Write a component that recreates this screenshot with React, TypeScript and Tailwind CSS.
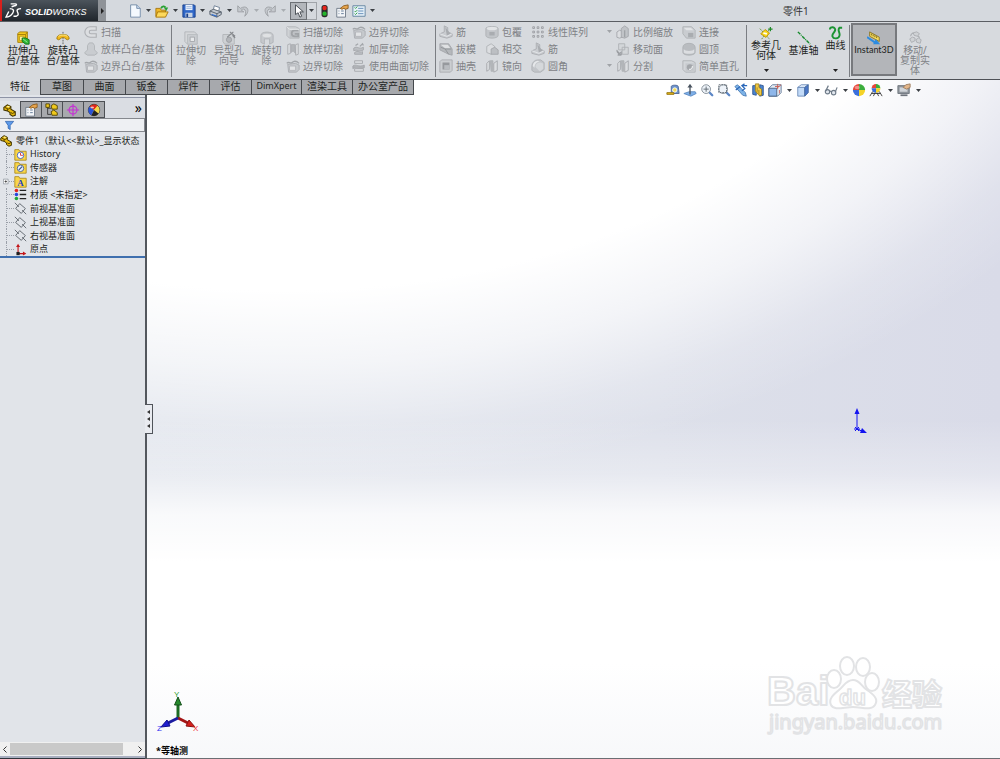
import clsx from "clsx";
import { JSX, ReactNode, useState } from "react";

type Command = { label: string; icon: string; menu?: boolean };

const bossCommands: Command[] = [
  { label: "扫描", icon: "sweep" },
  { label: "放样凸台/基体", icon: "loft" },
  { label: "边界凸台/基体", icon: "boundary" },
];

const cutCommands: Command[][] = [
  [
    { label: "扫描切除", icon: "sweepCut" },
    { label: "放样切割", icon: "loftCut" },
    { label: "边界切除", icon: "boundary" },
  ],
  [
    { label: "边界切除", icon: "boundary" },
    { label: "加厚切除", icon: "thicken" },
    { label: "使用曲面切除", icon: "surfaceCut" },
  ],
];

const ribCommands: Command[] = [
  { label: "筋", icon: "rib" },
  { label: "拔模", icon: "draft" },
  { label: "抽壳", icon: "shell" },
];

const wrapCommands: Command[] = [
  { label: "包覆", icon: "wrap" },
  { label: "相交", icon: "intersect" },
  { label: "镜向", icon: "mirror" },
];

const patternCommands: Command[] = [
  { label: "线性阵列", icon: "pattern", menu: true },
  { label: "筋", icon: "rib" },
  { label: "圆角", icon: "fillet", menu: true },
];

const scaleCommands: Command[] = [
  { label: "比例缩放", icon: "scale" },
  { label: "移动面", icon: "moveFace" },
  { label: "分割", icon: "mirror" },
];

const joinCommands: Command[] = [
  { label: "连接", icon: "join" },
  { label: "圆顶", icon: "dome" },
  { label: "简单直孔", icon: "hole" },
];

const tabs = [
  { label: "特征", width: "w-[41px]" },
  { label: "草图", width: "w-[43px]" },
  { label: "曲面", width: "w-[42px]" },
  { label: "钣金", width: "w-[42px]" },
  { label: "焊件", width: "w-[42px]" },
  { label: "评估", width: "w-[42px]" },
  { label: "DimXpert", width: "w-[50px]" },
  { label: "渲染工具", width: "w-[51px]" },
  { label: "办公室产品", width: "w-[61px]" },
];

const treeItems = [
  { label: "History", icon: "history" },
  { label: "传感器", icon: "sensor" },
  { label: "注解", icon: "annotation", expandable: true },
  { label: "材质 <未指定>", icon: "material" },
  { label: "前视基准面", icon: "plane" },
  { label: "上视基准面", icon: "plane" },
  { label: "右视基准面", icon: "plane" },
  { label: "原点", icon: "origin" },
];

const folder = (
  <path d="M1 2h5l1 2h8v11H1z" fill="#f9d648" stroke="#a9861a" strokeWidth="1" />
);

const partShape = (
  <>
    <path
      d="M1 5l4-3 4 2v3l5 3v4l-3 1-3-2v-2L5 9 1 8z"
      fill="#e8b90c"
      stroke="#3f3200"
      strokeWidth="1.2"
    />
    <path d="M2 5l4 2 3-2M9 11l2 1 3-2M5 7v2" fill="none" stroke="#3f3200" />
    <path d="M4 4l2-1 2 1-2 1z" fill="#fff3a0" />
  </>
);

const ball = (
  <>
    <path d="M8 8V1a7 7 0 0 0-7 7z" fill="#e8463a" />
    <path d="M8 8V1a7 7 0 0 1 7 7z" fill="#3cae3c" />
    <path d="M8 8h7a7 7 0 0 1-7 7z" fill="#f5d328" />
    <path d="M8 8v7a7 7 0 0 1-7-7z" fill="#3a6fdc" />
    <ellipse cx="6" cy="5" rx="3" ry="2" fill="#fff" opacity="0.4" />
  </>
);

const appearance = (
  <>
    <circle cx="8" cy="8" r="6.5" fill="#f3c81c" stroke="#333" />
    <path d="M8 8L3 4a6.500 6.500 0 0 1 9-1z" fill="#e0241c" />
    <path d="M8 8l4-5a6.500 6.500 0 0 1 1 9z" fill="#f3d84c" />
    <path d="M8 8l5 4a6.500 6.500 0 0 1-8 2z" fill="#222" />
    <path d="M8 8l-3 6a6.500 6.500 0 0 1-2-10z" fill="#2a52d8" />
    <ellipse cx="6" cy="5" rx="2" ry="1" fill="#fff" opacity="0.7" />
  </>
);

const printer = (
  <>
    <path d="M5 7l1-5 6 2-1 5z" fill="#fff" stroke="#66788f" />
    <path d="M1 8l4-2 9 3v3l-5 3-8-3z" fill="#c3c9d1" stroke="#4f5965" />
    <path d="M1 8l8 3 5-2M9 11v4" fill="none" stroke="#4f5965" />
    <path d="M3 12l6 2" stroke="#2a6ad0" strokeWidth="1.5" />
  </>
);

const magnifier = (
  <>
    <path d="M10 10l4 4" stroke="#5b86c6" strokeWidth="2.6" strokeLinecap="round" />
    <circle cx="7" cy="7" r="5" fill="#eef3f9" stroke="#7d8790" />
  </>
);

const icons: Record<string, ReactNode> = {
  // greyed ribbon glyphs
  sweep: (
    <path
      d="M14 2H7a6 6 0 0 0 0 12h7v-4H8a2 2 0 0 1 0-4h6z"
      fill="#dcdee1"
      stroke="#adb0b4"
      strokeWidth="1.3"
    />
  ),
  loft: (
    <path
      d="M6 1h4l2 3v5l3 3v1l-3 2H4l-3-2v-1l3-3V4z"
      fill="#c9ccd0"
      stroke="#b0b3b7"
    />
  ),
  boundary: (
    <>
      <path d="M2 6l9-1 4 2v5l-3 3H3z" fill="#c6c9cd" stroke="#a9acb0" />
      <path d="M1 5c2-3 4 1 6-1s5-2 8 1" fill="none" stroke="#a3a6aa" strokeWidth="1.500" />
      <path d="M4 8h7v5H4z" fill="#e2e4e6" stroke="#b2b5b9" />
    </>
  ),
  sweepCut: (
    <>
      <path d="M1 2h10l4 2v11H4l-3-3z" fill="#cfd2d5" stroke="#b2b5b9" />
      <path d="M4 5h11v10H4z" fill="#bfc2c6" />
      <path d="M14 6h-4a3 3 0 0 0 0 7h4v-3h-4" fill="none" stroke="#a0a3a7" strokeWidth="2" />
      <path d="M1 2l3 3h11" fill="none" stroke="#e8eaec" />
    </>
  ),
  loftCut: (
    <>
      <path d="M2 3l3-1v11l-3 1zM11 3l3-1v12l-3 1z" fill="#dcdee1" stroke="#a9acb0" />
      <path d="M6 3h4l1 10-3-3-2 2z" fill="#b3b6ba" stroke="#a9acb0" />
    </>
  ),
  thicken: (
    <>
      <path d="M2 7c4-3 6 2 11-1v3c-5 3-7-1-11 1zM3 12c4-3 6 1 9-1v3H3z" fill="#bcbfc3" stroke="#a3a6aa" />
      <path d="M4 4l3-2M9 5l3-3 1 2" stroke="#a3a6aa" strokeWidth="1.500" fill="none" />
    </>
  ),
  surfaceCut: (
    <>
      <path d="M3 2h9v3H3zM3 11h10v3H3z" fill="#dcdee1" stroke="#a3a6aa" />
      <path d="M1 8c4-3 6 2 13-1v3c-6 2-9-2-13 1z" fill="#b0b3b7" stroke="#a3a6aa" />
    </>
  ),
  rib: (
    <>
      <path d="M1 10l5-2V1l4 2v5l5 2v3l-6 2-8-2z" fill="#c9ccd0" stroke="#aaadb1" />
      <path d="M7 2l6 8-4 2z" fill="#a9acb0" />
      <path d="M1 10l8 3 6-3" fill="none" stroke="#e6e8ea" />
    </>
  ),
  draft: (
    <>
      <path d="M1 2h10l4 6v7l-4-1-10-5z" fill="#b5b8bc" stroke="#a3a6aa" />
      <path d="M2 3h8l3 4H7z" fill="#dfe1e3" />
      <path d="M7 8l4 6M2 6l5 2h7" fill="none" stroke="#8f9296" />
    </>
  ),
  shell: (
    <>
      <path d="M1 3l2-2h12v12l-2 2H1z" fill="#cbced1" stroke="#a9acb0" />
      <path d="M4 4h8v8H4z" fill="#96999d" />
      <path d="M6 7h6v5H6z" fill="#b9bcc0" />
    </>
  ),
  wrap: (
    <>
      <path d="M1 4c0-3 14-3 14 0v8c0 4-14 4-14 0z" fill="#c2c5c9" stroke="#aeb1b5" />
      <ellipse cx="8" cy="4" rx="6" ry="2" fill="#e2e4e6" />
      <path d="M5 8h6v4H5z" fill="#a9acb0" />
    </>
  ),
  intersect: (
    <>
      <path d="M2 5l5-3 4 3v5l-4 4-5-2z" fill="#dcdee1" stroke="#aeb1b5" />
      <path d="M7 8l4-2 4 3v5H7z" fill="#bcbfc3" stroke="#a3a6aa" />
    </>
  ),
  mirror: (
    <>
      <path d="M2 5l3-3v10l-3 2zM10 5l4-3v11l-4 2z" fill="#dcdee1" stroke="#a3a6aa" />
      <path d="M6 2h3v12H7z" fill="#b3b6ba" stroke="#aeb1b5" />
    </>
  ),
  pattern: (
    <path
      d="M2 2h2v2H2zM7 2h2v2H7zM12 2h2v2h-2zM2 7h2v2H2zM7 7h2v2H7zM12 7h2v2h-2zM2 12h2v2H2zM7 12h2v2H7zM12 12h2v2h-2z"
      fill="#d5d8db"
      stroke="#9a9da1"
    />
  ),
  fillet: (
    <>
      <path d="M1 13V8a7 7 0 0 1 7-7h3l4 3v8l-4 3H4z" fill="#c2c5c9" stroke="#aeb1b5" />
      <path d="M2 8a6 6 0 0 1 6-6l2 1c-4 0-6 3-6 7z" fill="#e6e8ea" />
      <path d="M5 9c0-3 2-5 6-5l3 1v6l-4 3z" fill="#d5d8db" />
    </>
  ),
  scale: (
    <>
      <path d="M1 8l3-2 3 1v7l-3 1-3-1z" fill="#dcdee1" stroke="#a3a6aa" />
      <path d="M6 4l4-3 4 3v9l-4 2-4-1z" fill="#c0c3c7" stroke="#a3a6aa" />
      <path d="M10 6v8" stroke="#8f9296" />
    </>
  ),
  moveFace: (
    <>
      <path d="M3 2h7v7H3zM7 6h7v8H7z" fill="#d3d6d9" stroke="#aeb1b5" />
      <path d="M1 9c0 4 2 5 5 5M6 11v4H2z" fill="#9a9da1" stroke="#9a9da1" />
    </>
  ),
  join: (
    <>
      <path d="M1 2h10l4 4v9H5l-4-5z" fill="#c9ccd0" stroke="#aeb1b5" />
      <path d="M2 3h8l3 3H5z" fill="#e2e4e6" />
      <path d="M7 9h6v5H7z" fill="#a9acb0" />
    </>
  ),
  dome: (
    <>
      <path d="M1 6c0-6 14-6 14 0v6c0 4-14 4-14 0z" fill="#b9bcc0" stroke="#aeb1b5" />
      <path d="M2 8c1 3 11 3 12 0v4c-1 2-11 2-12 0z" fill="#dcdee1" />
    </>
  ),
  hole: (
    <>
      <path d="M1 2h10l4 2v11H4l-3-3z" fill="#d3d6d9" stroke="#aeb1b5" />
      <path d="M4 5h10v9H4z" fill="#c6c9cd" />
      <circle cx="9" cy="9.500" r="3.500" fill="#a3a6aa" />
      <path d="M8 12c3 0 4-2 4-4" fill="none" stroke="#e6e8ea" strokeWidth="1.500" />
    </>
  ),
  extrudeCut: (
    <>
      <path d="M1 1h11l3 3v11H4l-3-3z" fill="#d5d7da" stroke="#b0b3b7" />
      <path d="M4 4h11v11H4z" fill="#c9ccd0" stroke="#b8bbbf" />
      <path d="M7 7h5v5H7z" fill="#e6e8ea" stroke="#a3a6aa" />
    </>
  ),
  holeWizard: (
    <>
      <path d="M1 4h10l3 2v9H3l-2-3z" fill="#ced1d4" stroke="#b0b3b7" />
      <circle cx="8" cy="10" r="3" fill="#b3b6ba" stroke="#9a9da1" />
      <path d="M6 7l7-6M9 1l6 5M12 5l3 3" stroke="#85888c" strokeWidth="1.300" />
    </>
  ),
  revolveCut: (
    <>
      <path d="M1 5c0-5 14-5 14 0v8l-4 2V9H5v6l-4-2z" fill="#c6c9cd" stroke="#b0b3b7" />
      <ellipse cx="8" cy="5" rx="5" ry="2" fill="#dfe1e3" />
    </>
  ),
  moveCopy: (
    <>
      <path d="M6 2l4-1 3 2-2 3-4-1zM2 9l3-2 3 1v3l-4 2zM9 10l3-2 3 2-1 4-4-1z" fill="#cfd2d5" stroke="#a9acb0" />
      <path d="M3 6c0-2 1-3 3-4M11 6c2 0 2 1 2 2" fill="none" stroke="#a9acb0" strokeWidth="1.300" />
    </>
  ),
  // coloured ribbon glyphs
  extrude: (
    <>
      <path d="M2 3l2-2h9v9l-2 3H2z" fill="#f3c81c" stroke="#a07a08" />
      <path d="M2 4h9v9M11 4l2-3" fill="none" stroke="#a07a08" />
      <path d="M4 6h5v5H4z" fill="#fdf0a0" stroke="#c09a18" />
      <path d="M7 8h4l4 2v5h-4l-4-3z" fill="#2fb637" stroke="#0f7016" />
      <path d="M8 9l5 4" stroke="#a2f0a0" />
    </>
  ),
  revolve: (
    <>
      <path d="M8 1v14" stroke="#555" strokeDasharray="2 1" />
      <path d="M1 9c0-4 3-5 7-5s7 1 7 5l-2 1-2-1c0-2-6-2-6 0l-2 1z" fill="#f3b81c" stroke="#a07a08" />
      <path d="M3 6c3-2 7-2 10 0" fill="none" stroke="#fdf0a0" />
    </>
  ),
  refGeometry: (
    <>
      <path d="M1 3l11 12M3 15l9-11" stroke="#5a8a2c" strokeDasharray="2 1" />
      <path d="M7 4l5 4-4 5-6-4z" fill="#f7d51a" stroke="#b89008" />
      <path d="M5 8l4 1" stroke="#fff" strokeWidth="2" />
      <path d="M13 1v5M10.500 3.500h5" stroke="#1e8a28" strokeWidth="1.400" />
    </>
  ),
  axis: <path d="M1 1l14 14" stroke="#138a2a" strokeWidth="1.600" strokeDasharray="4 1 1 1" />,
  curve: (
    <path
      d="M1 4c0-4 7-3 6 1-1 3-4 4-3 7s7 3 8-1-3-6 0-9h3"
      fill="none"
      stroke="#1c9433"
      strokeWidth="2.200"
    />
  ),
  instant: (
    <>
      <path d="M3 1l11 6v5L3 6z" fill="#f2d85c" stroke="#8a7420" />
      <path d="M5 3v2M7 4v2M9 5v2M11 6v2" stroke="#75621a" />
      <path d="M0 7l9 6" stroke="#2d8be0" strokeWidth="2.200" />
      <path d="M10 9l5 6H7z" fill="#2d8be0" />
    </>
  ),
  // quick access
  newDoc: (
    <>
      <path d="M3 1h7l4 4v10H3z" fill="#f4f9fe" stroke="#6f88a6" />
      <path d="M10 1v4h4" fill="#c8dcf0" stroke="#6f88a6" />
    </>
  ),
  open: (
    <>
      <path d="M1 5h5l1 2h5v7H1z" fill="#f0b92a" stroke="#a67408" />
      <path d="M3 9h12l-3 6H1z" fill="#fdd95c" stroke="#a67408" />
      <path d="M7 5c1-3 4-3 5-1" fill="none" stroke="#28a032" strokeWidth="2" />
      <path d="M10 4h5l-2 4z" fill="#28a032" />
    </>
  ),
  save: (
    <>
      <path d="M1 1h13l1 1v13H1z" fill="#2f67c8" stroke="#163c86" />
      <path d="M4 1h8v6H4z" fill="#eaf1fb" />
      <path d="M5 3h6M5 5h6" stroke="#9ab4dc" />
      <path d="M4 10h8v5H4z" fill="#c7d3e4" />
      <path d="M5 11h2v4H5z" fill="#1a3f86" />
    </>
  ),
  printer,
  undo: (
    <path d="M2 2v7h7L6 7c3-3 7 0 4 7 7-6 3-14-5-9z" fill="#c5c9ce" stroke="#9b9fa4" />
  ),
  redo: (
    <path d="M14 2v7H7l3-2C7 4 3 7 6 14-1 8 3 0 11 5z" fill="#c5c9ce" stroke="#9b9fa4" />
  ),
  pointer: (
    <path d="M4 1v11l3-2 2 5 2-1-2-5h4z" fill="#fff" stroke="#3c4148" />
  ),
  traffic: (
    <>
      <rect x="4" y="1" width="7" height="14" rx="3" fill="#2b2b2b" />
      <circle cx="7.500" cy="4.500" r="2.500" fill="#e8251c" />
      <circle cx="7.500" cy="11" r="2.500" fill="#23b52c" />
    </>
  ),
  properties: (
    <>
      <path d="M2 5h10v10H2z" fill="#f3f5f8" stroke="#6a7683" />
      <path d="M4 8h1M7 8h3M4 11h1M7 11h3" stroke="#58718f" />
      <path d="M6 5l4-3 5-1v4l-3 1-2-1-2 1z" fill="#e7a44c" stroke="#8a5a1c" />
    </>
  ),
  options: (
    <>
      <path d="M1 2h14v12H1z" fill="#e5f0f8" stroke="#5c7f9b" />
      <path d="M7 5h6M7 8h6M7 11h6" stroke="#5b87b5" />
      <path d="M3 4l1 1 2-2M3 8l1 1 2-2M3 11l1 1 2-2" fill="none" stroke="#209a30" />
    </>
  ),
  // heads-up view toolbar
  tape: (
    <>
      <path d="M6 4c0-2 8-2 8 0l1 8H6z" fill="#6e94cc" stroke="#4a6596" />
      <circle cx="10" cy="8" r="2.500" fill="#f2dc5a" stroke="#fff" />
      <path d="M1 11h8v2H1z" fill="#e4b818" stroke="#967510" />
    </>
  ),
  normalTo: (
    <>
      <path d="M1 12l6-2h7l1 2-6 3z" fill="#7fb1ea" stroke="#5a88c0" />
      <path d="M8 13V2" stroke="#48525e" strokeWidth="1.500" />
      <path d="M5 5l3-4 3 4z" fill="#48525e" />
    </>
  ),
  zoomFit: (
    <>
      {magnifier}
      <path d="M7 4v6M4 7h6" stroke="#59636d" />
    </>
  ),
  zoomArea: (
    <>
      {magnifier}
      <path d="M2 2h9v9H2z" fill="none" stroke="#59636d" strokeDasharray="2 1" />
    </>
  ),
  prevView: (
    <>
      <path d="M1 4l3-2 9 9 1 4-4-1z" fill="#7db3e8" stroke="#4a7bb4" />
      <path d="M2 8l5-4M15 3H9M12 1L9 3l3 3M9 9l4-3" fill="none" stroke="#2b68ba" strokeWidth="1.400" />
    </>
  ),
  section: (
    <>
      <path d="M2 3h4v11l-4-1zM10 2l4 1v11l-4 1z" fill="#4d85cf" stroke="#2c5490" />
      <path d="M5 1h4v4l3 2v7H9l-4-5z" fill="#f2cb45" stroke="#a5831a" />
      <path d="M7 5v5M9 8v5" stroke="#a5831a" />
    </>
  ),
  viewOrient: (
    <>
      <path d="M5 2h10v9l-4 4H1V6z" fill="#e5edf7" stroke="#5b7392" />
      <path d="M1 6h9v9H1z" fill="#8fb7ea" stroke="#48607f" />
      <path d="M10 6l5-4M8 4h5M11 1v6M13 8v4" stroke="#c95a50" />
    </>
  ),
  displayStyle: (
    <>
      <path d="M2 5h8v10H2z" fill="#c3dbf8" stroke="#6a8ab8" />
      <path d="M2 5l4-3h8l-4 3z" fill="#e7f1fd" stroke="#6a8ab8" />
      <path d="M10 5l4-3v9l-4 4z" fill="#4a77c8" stroke="#44689c" />
    </>
  ),
  glasses: (
    <g fill="#e2e8ef" stroke="#6f7b88" strokeWidth="1.300">
      <circle cx="4" cy="10" r="2.500" />
      <circle cx="11" cy="11" r="2.500" />
      <path d="M6 9l3 1M2 9l3-6M13 10l2-5" fill="none" />
    </g>
  ),
  ball,
  appearance,
  scene: (
    <>
      <path d="M1 15l3-5h8l3 5M5 15l2-4M11 15l-2-4M3 12h10" fill="none" stroke="#333" />
      <path d="M8 6V1a5 5 0 0 0-5 5z" fill="#e8463a" />
      <path d="M8 6V1a5 5 0 0 1 5 5z" fill="#3cae3c" />
      <path d="M8 6h5a5 5 0 0 1-5 5z" fill="#f5d328" />
      <path d="M8 6v5a5 5 0 0 1-5-5z" fill="#3a6fdc" />
    </>
  ),
  viewSettings: (
    <>
      <path d="M1 3h13v9H1z" fill="#8f959c" stroke="#6d737b" />
      <path d="M3 5h9v5H3z" fill="#d0d4d9" />
      <path d="M4 14h8" stroke="#6d737b" strokeWidth="2" />
      <path d="M7 5l3-3 5-1v4l-4 2z" fill="#e3b68a" stroke="#9a7a5c" />
    </>
  ),
  // feature manager
  part: partShape,
  config: (
    <>
      <path d="M3 2v11h4M3 6h4" fill="none" stroke="#333" />
      <path d="M1 1h4v4H1zM7 3l3-2 4 2v4H8zM7 10l3-2 4 3v3H8z" fill="#efc81c" stroke="#4f4000" />
    </>
  ),
  target: (
    <g fill="none" stroke="#c531d4" strokeWidth="1.300">
      <circle cx="8" cy="8" r="4.500" />
      <path d="M8 1v14M1 8h14" />
    </g>
  ),
  funnel: <path d="M2 2h12l-5 6v6l-3-2V8z" fill="#5e9bea" stroke="#2259a8" />,
  history: (
    <>
      {folder}
      <circle cx="8" cy="9" r="4" fill="#fff" stroke="#2b4fc0" />
      <path d="M8 6v3h3" fill="none" stroke="#c22" />
    </>
  ),
  sensor: (
    <>
      {folder}
      <circle cx="8" cy="9" r="4" fill="#e6efff" stroke="#38538a" />
      <path d="M6 11l4-4" stroke="#38538a" strokeWidth="1.500" />
    </>
  ),
  annotation: (
    <>
      {folder}
      <text x="8" y="13" textAnchor="middle" fontSize="11" fontWeight="700" fill="#1c3fc0" fontFamily="Liberation Serif, serif">
        A
      </text>
    </>
  ),
  material: (
    <>
      <circle cx="3" cy="3" r="2.200" fill="#e0241c" />
      <circle cx="3" cy="8" r="2.200" fill="#2844dc" />
      <circle cx="3" cy="13" r="2.200" fill="#1ea53a" />
      <path d="M7 3h8M7 8h8M7 13h8" stroke="#222" strokeWidth="1.600" />
    </>
  ),
  plane: (
    <path d="M2 8l5-6 7 6-5 6zM1 1l5 5M10 10l5 5" fill="none" stroke="#50565e" />
  ),
  origin: (
    <>
      <path d="M5 13V3M5 13h9" stroke="#c4181c" strokeWidth="1.400" />
      <path d="M2.500 5L5 1l2.500 4zM11 10.500l4 2.500-4 2.500z" fill="#c4181c" />
      <rect x="3" y="11" width="4" height="4" fill="#222" />
    </>
  ),
};

function Icon({ name, className = "size-[14px]" }: { name: string; className?: string }) {
  return (
    <svg viewBox="0 0 16 16" className={clsx("shrink-0", className)} aria-hidden="true">
      {icons[name]}
    </svg>
  );
}

function Caret({ className = "text-[#3b3f44]" }: { className?: string }) {
  return (
    <svg viewBox="0 0 5 3" className={clsx("h-[3px] w-[5px] shrink-0", className)} aria-hidden="true">
      <path d="M0 0h5L2.500 3z" fill="currentColor" />
    </svg>
  );
}

function CommandColumn({ commands, className }: { commands: Command[]; className: string }) {
  return (
    <div className={clsx("flex shrink-0 flex-col", className)}>
      {commands.map((command) => (
        <button
          key={command.label}
          className="flex h-[17px] items-center gap-[3px] text-left text-[#7f8286]"
        >
          <Icon name={command.icon} />
          <span className="flex-1">{command.label}</span>
          {command.menu && <Caret className="mr-1 text-[#a0a3a7]" />}
        </button>
      ))}
    </div>
  );
}

function BigCommand({
  label,
  icon,
  className,
  menu = false,
}: {
  label: string;
  icon: string;
  className: string;
  menu?: boolean;
}) {
  return (
    <button className={clsx("flex shrink-0 flex-col items-center leading-[10px]", className)}>
      <Icon name={icon} />
      <span className="whitespace-pre-line">{label}</span>
      {menu && <Caret className="mt-auto mb-[7px] text-[#222]" />}
    </button>
  );
}

function Divider() {
  return <div className="my-[2px] w-px shrink-0 self-stretch bg-[#7b7e83]" />;
}

function TitleBar() {
  const quickAccess = ["newDoc", "open", "save", "printer", "undo", "redo"];
  return (
    <header className="flex h-[22px] shrink-0 items-center border-b border-[#5b5e63] bg-[#d5d9de]">
      <div className="flex h-full w-[98px] shrink-0 items-center gap-[3px] border-l-2 border-[#d8201c] bg-gradient-to-b from-[#4c545c] to-[#20262c] pl-[3px] text-white">
        <svg viewBox="0 0 18 18" className="size-[17px]" fill="none" stroke="#fff" strokeWidth="1.500" aria-hidden="true">
          <path d="M6 2h5c2 0 1 2-1 2L7 5M5 7c4 0 5 2 3 5s-4 4-7 4l3-6" />
          <path d="M17 7c-3 0-5 1-4 3s2 4-1 5H9" />
        </svg>
        <span className="pt-[2px] font-['Liberation_Sans',sans-serif] text-[9px] font-bold italic">
          SOLID<span className="font-normal">WORKS</span>
        </span>
      </div>
      <button className="flex h-full w-[8px] items-center justify-center bg-[#8f9398]" aria-label="Menu">
        <svg viewBox="0 0 3 6" className="h-[6px] w-[3px]">
          <path d="M0 0l3 3-3 3z" fill="#222" />
        </svg>
      </button>
      <div className="ml-[22px] flex h-full items-center">
        {quickAccess.map((name, i) => (
          <button key={name} className="flex w-[27px] items-center gap-[4px]" aria-label={name}>
            <Icon name={name} />
            <Caret className={i > 3 ? "text-[#a9adb2]" : "text-[#3b3f44]"} />
          </button>
        ))}
        <button className="flex h-[18px] w-[17px] items-center justify-center border border-[#6d7176] bg-[#b2b6bb]" aria-label="选择">
          <Icon name="pointer" />
        </button>
        <button className="flex h-[18px] w-[10px] items-center justify-center border border-l-0 border-[#a0a4a9]" aria-label="选择选项">
          <Caret />
        </button>
        <button className="ml-[1px]" aria-label="重建模型">
          <Icon name="traffic" />
        </button>
        <button className="ml-[3px]" aria-label="文件属性">
          <Icon name="properties" />
        </button>
        <button className="ml-[3px] flex items-center gap-[4px]" aria-label="选项">
          <Icon name="options" />
          <Caret />
        </button>
      </div>
      <p className="flex-1 pl-[408px] text-[#333]">零件1</p>
    </header>
  );
}

function Ribbon() {
  return (
    <div className="flex h-[58px] shrink-0 overflow-hidden border-b border-[#4e5156] bg-[#d7dade] pt-px text-[#1d1f22]">
      <div className="flex w-[171px] shrink-0 pl-[3px]">
        <BigCommand label={"拉伸凸\n台/基体"} icon="extrude" className="w-[40px] pt-[8px]" />
        <BigCommand label={"旋转凸\n台/基体"} icon="revolve" className="w-[40px] pt-[8px]" />
        <CommandColumn commands={bossCommands} className="w-[86px] pl-[1px]" />
      </div>
      <Divider />
      <div className="flex w-[263px] shrink-0 text-[#7f8286]">
        <BigCommand label={"拉伸切\n除"} icon="extrudeCut" className="w-[38px] pt-[8px]" />
        <BigCommand label={"异型孔\n向导"} icon="holeWizard" className="w-[38px] pt-[8px]" />
        <BigCommand label={"旋转切\n除"} icon="revolveCut" className="w-[37px] pt-[8px]" />
        <CommandColumn commands={cutCommands[0]} className="w-[66px] pl-[1px]" />
        <CommandColumn commands={cutCommands[1]} className="w-[82px] pl-[1px]" />
      </div>
      <Divider />
      <div className="flex w-[310px] shrink-0 pl-[3px]">
        <CommandColumn commands={ribCommands} className="w-[46px]" />
        <CommandColumn commands={wrapCommands} className="w-[46px]" />
        <CommandColumn commands={patternCommands} className="w-[85px]" />
        <CommandColumn commands={scaleCommands} className="w-[66px]" />
        <CommandColumn commands={joinCommands} className="w-[65px]" />
      </div>
      <Divider />
      <div className="flex w-[102px] shrink-0">
        <BigCommand label={"参考几\n何体"} icon="refGeometry" className="w-[38px] pt-[3px]" menu />
        <BigCommand label="基准轴" icon="axis" className="w-[37px] pt-[8px]" />
        <BigCommand label="曲线" icon="curve" className="w-[27px] pt-[3px]" menu />
      </div>
      <Divider />
      <button className="ml-[1px] flex h-[53px] w-[46px] shrink-0 flex-col items-center border-2 border-[#77797d] bg-[#b3b5b9] pt-[6px] font-['Lato','Noto_Sans',sans-serif] text-[9px] leading-[10px]">
        <Icon name="instant" />
        Instant3D
      </button>
      <BigCommand
        label={"移动/\n复制实\n体"}
        icon="moveCopy"
        className="w-[36px] pt-[8px] text-[#7f8286]"
      />
    </div>
  );
}

function CommandTabs() {
  const [active, setActive] = useState("特征");
  return (
    <nav className="absolute top-0 left-0 flex h-[15px]">
      {tabs.map(({ label, width }) => (
        <button
          key={label}
          onClick={() => setActive(label)}
          className={clsx(
            "shrink-0 border-r border-[#45484c] pb-[3px] text-center leading-[12px] text-[#1d1f22]",
            width,
            label === active ? "-mt-px bg-[#d7dade]" : "border-b bg-[#a7a9ad]",
            label === "DimXpert" && "text-[9px]",
          )}
        >
          {label}
        </button>
      ))}
    </nav>
  );
}

function FeatureTree() {
  return (
    <div className="overflow-hidden border-b-2 border-[#3f6fae] pt-[2px] text-[9px] whitespace-nowrap text-[#1b1d20]">
      <ul className="grid h-[122px] auto-rows-fr">
        <li className="flex items-center gap-[3px]">
          <Icon name="part" className="size-[13px]" />
          <span>零件1（默认&lt;&lt;默认&gt;_显示状态</span>
        </li>
        {treeItems.map((item) => (
          <li key={item.label} className="flex items-center">
            <span className="flex w-[14px] shrink-0 items-center self-stretch pl-[3px]">
              {item.expandable ? (
                <svg viewBox="0 0 7 7" className="size-[7px]" aria-hidden="true">
                  <path d="M.5 .5h6v6h-6z" fill="#fff" stroke="#9096a0" />
                  <path d="M2 3.500h3M3.500 2v3" stroke="#333" />
                </svg>
              ) : (
                <span className="ml-[3px] h-full w-px border-l border-dotted border-[#9a9fa8]" />
              )}
              <span className="w-[7px] border-t border-dotted border-[#9a9fa8]" />
            </span>
            <Icon name={item.icon} className="size-[13px]" />
            <span className="ml-[3px]">{item.label}</span>
          </li>
        ))}
      </ul>
    </div>
  );
}

function FeatureManager() {
  const managerTabs = ["part", "properties", "config", "target", "appearance"];
  return (
    <aside className="flex w-[147px] shrink-0 flex-col border-r-2 border-[#53575d] bg-[#e1e4e9] pt-[15px]">
      <div className="mt-[2px] flex h-[21px] shrink-0 items-end border-t border-[#8d93a5] bg-[#dadde3]">
        {managerTabs.map((name, i) => (
          <button
            key={name}
            aria-label={name}
            className={clsx(
              "flex h-[17px] w-[21px] items-center justify-center border-r border-[#4c4f54]",
              i === 0 ? "bg-[#e1e4e9]" : "border-t border-b bg-[#a7a9ad]",
            )}
          >
            <Icon name={name} />
          </button>
        ))}
        <button className="mr-[3px] mb-[3px] ml-auto text-[14px] leading-[14px]" aria-label="展开">
          »
        </button>
      </div>
      <label className="flex h-[14px] shrink-0 items-center border border-l-0 border-[#85888e] bg-[#eef0f3] pl-[4px]">
        <Icon name="funnel" className="size-[11px]" />
        <input type="text" aria-label="过滤" className="h-full min-w-0 flex-1 bg-transparent outline-none" />
      </label>
      <FeatureTree />
      <div className="mt-auto flex h-[14px] shrink-0 items-center bg-[#f0f0f0]">
        <button className="flex w-[10px] justify-center" aria-label="向左滚动">
          <svg viewBox="0 0 4 7" className="h-[7px] w-[4px]" fill="none" stroke="#333">
            <path d="M3.500 .5l-3 3 3 3" />
          </svg>
        </button>
        <div className="h-[12px] w-[113px] bg-[#c9c9c9]" />
        <button className="ml-auto flex w-[10px] justify-center" aria-label="向右滚动">
          <svg viewBox="0 0 4 7" className="h-[7px] w-[4px]" fill="none" stroke="#333">
            <path d="M.5 .5l3 3-3 3" />
          </svg>
        </button>
      </div>
      <div className="h-[3px] shrink-0 border-b border-[#30343c] bg-[#a9afc0]" />
    </aside>
  );
}

function HeadsUpToolbar() {
  const tools: { name: string; menu?: boolean }[] = [
    { name: "tape" },
    { name: "normalTo" },
    { name: "zoomFit" },
    { name: "zoomArea" },
    { name: "prevView" },
    { name: "section" },
    { name: "viewOrient", menu: true },
    { name: "displayStyle", menu: true },
    { name: "glasses", menu: true },
    { name: "ball" },
    { name: "scene", menu: true },
    { name: "viewSettings", menu: true },
  ];
  return (
    <div className="flex justify-end pt-[3px] pr-[75px]">
      {tools.map(({ name, menu }) => (
        <button
          key={name}
          aria-label={name}
          className={clsx("flex items-center gap-[5px]", menu ? "w-[28px]" : "w-[17px]")}
        >
          <Icon name={name} />
          {menu && <Caret />}
        </button>
      ))}
    </div>
  );
}

function Triad(): JSX.Element {
  return (
    <svg viewBox="0 0 44 42" className="h-[42px] w-[44px]" aria-hidden="true">
      <path d="M22 28V12" stroke="#1c6b22" strokeWidth="3" />
      <path d="M18.500 15L22 7l3.500 8z" fill="#268a2c" stroke="#14501a" />
      <path d="M22 28l12 6" stroke="#a31414" strokeWidth="3" />
      <path d="M33 30l6 7-9-1z" fill="#d4201c" stroke="#8a1010" />
      <path d="M22 28l-12 6" stroke="#1a1aa0" strokeWidth="3" />
      <path d="M11 30l-6 7 9-1z" fill="#2020d0" stroke="#10108a" />
      <g fontFamily="Liberation Sans, sans-serif" fontSize="8">
        <text x="18" y="7" fill="#2ca032">Y</text>
        <text x="37" y="41" fill="#f03030">X</text>
        <text x="1" y="41" fill="#2a2af0">Z</text>
      </g>
    </svg>
  );
}

function OriginMarker() {
  return (
    <svg viewBox="0 0 16 28" className="absolute top-[327px] right-[131px] h-[28px] w-[16px]" aria-hidden="true">
      <path d="M4 22V5M4 22l7 3M2 20l4 4M6 20l-4 4M1 22h6" stroke="#1414f0" />
      <path d="M1.500 7L4 1l2.500 6zM9 21l5 5H7z" fill="#1414f0" />
    </svg>
  );
}

function Watermark() {
  return (
    <svg viewBox="0 0 184 90" className="h-[90px] w-[184px]" aria-hidden="true">
      <g
        fill="#fff"
        stroke="#e2e3e5"
        strokeWidth="2"
        strokeLinejoin="round"
        fontFamily="Liberation Sans, sans-serif"
        fontWeight="700"
      >
        <text x="4" y="57" fontSize="40">Bai</text>
        <ellipse cx="71" cy="31" rx="7" ry="9" />
        <ellipse cx="84" cy="18" rx="7" ry="9" />
        <ellipse cx="100" cy="19" rx="7" ry="9" />
        <ellipse cx="109" cy="34" rx="7" ry="9" />
        <path d="M90 32c-7 0-9 6-14 10s-11 9-8 15 13 2 22 2 18 4 22-2-2-11-8-15-7-10-14-10z" />
        <text x="76" y="57" fontSize="22" strokeWidth="1.500">du</text>
        <text x="119" y="57" fontSize="30" fontFamily="Noto Sans CJK SC, sans-serif">经验</text>
        <text x="6" y="81" fontSize="20" fontWeight="400" strokeWidth="1.500" fontFamily="Noto Sans, sans-serif">
          jingyan.baidu.com
        </text>
      </g>
    </svg>
  );
}

function Viewport() {
  return (
    <section className="relative flex min-w-0 flex-1 flex-col bg-[linear-gradient(to_bottom,transparent_50%,rgba(255,255,255,0.3)_58%,rgba(255,255,255,0.8)_64%,#fff_71%,#fff_86%,#f7f8fa_100%),radial-gradient(ellipse_114%_100%_at_16%_-40%,#fff_71%,rgba(255,255,255,0.65)_82%,rgba(255,255,255,0.2)_92%,transparent_100%),linear-gradient(to_right,#e0e4ec,#dde0ea_60%,#d9dbe8)]">
      <HeadsUpToolbar />
      <OriginMarker />
      <button
        className="absolute top-[324px] left-[-2px] flex h-[30px] w-[8px] flex-col items-center justify-center gap-[3px] border border-l-0 border-[#50545a] bg-[#e9ebf0]"
        aria-label="折叠面板"
      >
        {[0, 1, 2].map((i) => (
          <svg key={i} viewBox="0 0 3 4" className="h-[4px] w-[3px]">
            <path d="M3 0v4L0 2z" fill="#333" />
          </svg>
        ))}
      </button>
      <div className="mt-auto flex items-end justify-between pr-[53px] pl-[9px]">
        <div>
          <Triad />
          <p className="mt-[12px] text-[9px] leading-[14px] font-bold text-black">*等轴测</p>
        </div>
        <div className="pb-[20px]">
          <Watermark />
        </div>
      </div>
      <div className="h-px bg-[#6b6e73]" />
    </section>
  );
}

export default function App() {
  return (
    <div className="flex h-screen flex-col overflow-hidden bg-white font-['Noto_Sans','Noto_Sans_CJK_SC',sans-serif] text-[10px] leading-[14px] whitespace-nowrap">
      <TitleBar />
      <Ribbon />
      <main className="relative flex min-h-0 flex-1">
        <FeatureManager />
        <Viewport />
        <CommandTabs />
      </main>
    </div>
  );
}
